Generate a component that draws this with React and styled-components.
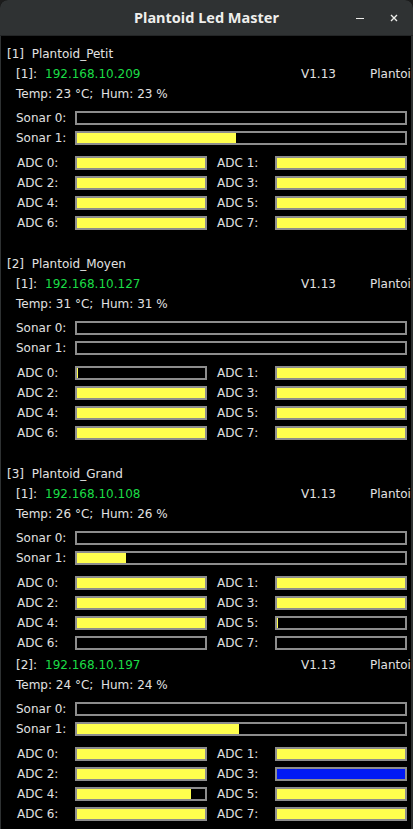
import React from "react";
import styled, { createGlobalStyle } from "styled-components";

const GlobalStyle = createGlobalStyle`
  html, body {
    margin: 0;
    padding: 0;
    background: #1c1c1c;
  }
  * {
    box-sizing: border-box;
  }
`;

const Window = styled.div`
  width: 413px;
  height: 829px;
  display: flex;
  flex-direction: column;
  overflow: hidden;
  border-radius: 8px 8px 0 0;
  background: #000;
`;

const TitleBar = styled.div`
  height: 36px;
  flex: none;
  display: grid;
  grid-template-columns: 1fr auto 1fr;
  align-items: center;
  background: #2f3233;
  border-bottom: 1px solid #232526;
`;

const Title = styled.div`
  grid-column: 2;
  font-family: "Noto Sans", "Open Sans", sans-serif;
  font-weight: bold;
  font-size: 14.5px;
  color: #eeeeec;
  padding-bottom: 1px;
`;

const Controls = styled.div`
  grid-column: 3;
  justify-self: end;
  display: flex;
  padding-right: 2px;
`;

const WinButton = styled.div`
  width: 34px;
  height: 35px;
  display: flex;
  align-items: center;
  justify-content: center;
`;

const Content = styled.div`
  flex: 1;
  overflow: hidden;
  background: #000;
  border-left: 1px solid #2e3132;
  border-right: 2px solid #2e3132;
  padding: 8px 0 0 6px;
  font-family: "DejaVu Sans", "Liberation Sans", sans-serif;
  font-size: 12px;
  color: #e2e2e2;
  white-space: nowrap;
`;

const Section = styled.div`
  margin-bottom: 21px;
`;

const Line = styled.div`
  height: 20px;
  line-height: 20px;
`;

const Device = styled.div`
  padding-left: 9px;
  margin-bottom: 2px;
`;

const IpRow = styled.div`
  height: 20px;
  line-height: 20px;
  display: grid;
  grid-template-columns: 29px 256px 69px auto;
`;

const Ip = styled.span`
  color: #1bdc46;
`;

const Sonars = styled.div`
  margin-top: 4px;
  margin-bottom: 5px;
`;

const SonarRow = styled.div`
  height: 20px;
  display: grid;
  grid-template-columns: 59px 332px;
  align-items: center;
`;

const AdcGrid = styled.div`
  display: grid;
  grid-template-columns: 59px 132px 68px 132px;
  grid-auto-rows: 20px;
  align-items: center;
`;

const AdcLabel = styled.span`
  padding-left: ${(p) => (p.right ? "10px" : "1px")};
  line-height: 20px;
`;

const Label = styled.span`
  line-height: 20px;
`;

const Bar = styled.div`
  height: 14px;
  border: 2px solid #8d8d8d;
  background: #000;
  display: flex;
`;

const Fill = styled.div`
  height: 100%;
  background: ${(p) => p.color || "#ffff4d"};
`;

const ProgressBar = ({ value, color }) => (
  <Bar>
    <Fill color={color} style={{ width: `${value}%` }} />
  </Bar>
);

const plantoids = [
  {
    name: "Plantoid_Petit",
    devices: [
      {
        ip: "192.168.10.209",
        temp: 23,
        hum: 23,
        sonar: [0, 48.5],
        adc: [100, 100, 100, 100, 100, 100, 100, 100],
      },
    ],
  },
  {
    name: "Plantoid_Moyen",
    devices: [
      {
        ip: "192.168.10.127",
        temp: 31,
        hum: 31,
        sonar: [0, 0],
        adc: [1, 100, 100, 100, 100, 100, 100, 100],
      },
    ],
  },
  {
    name: "Plantoid_Grand",
    devices: [
      {
        ip: "192.168.10.108",
        temp: 26,
        hum: 26,
        sonar: [0, 15],
        adc: [100, 100, 100, 100, 100, 1, 0, 0],
      },
      {
        ip: "192.168.10.197",
        temp: 24,
        hum: 24,
        sonar: [0, 49.4],
        adc: [100, 100, 100, 100, 89, 100, 100, 100],
        colors: { 3: "#0019f5" },
      },
    ],
  },
];

const DeviceBlock = ({ index, device, name }) => (
  <Device>
    <IpRow>
      <span>[{index}]:</span>
      <Ip>{device.ip}</Ip>
      <span>V1.13</span>
      <span>{name}</span>
    </IpRow>
    <Line>
      Temp: {device.temp} °C;&nbsp; Hum: {device.hum} %
    </Line>
    <Sonars>
      {device.sonar.map((v, i) => (
        <SonarRow key={i}>
          <Label>Sonar {i}:</Label>
          <ProgressBar value={v} />
        </SonarRow>
      ))}
    </Sonars>
    <AdcGrid>
      {device.adc.map((v, i) => (
        <React.Fragment key={i}>
          <AdcLabel right={i % 2 === 1}>ADC {i}:</AdcLabel>
          <ProgressBar value={v} color={device.colors && device.colors[i]} />
        </React.Fragment>
      ))}
    </AdcGrid>
  </Device>
);

export default function App() {
  return (
    <>
      <GlobalStyle />
      <Window>
        <TitleBar>
          <Title>Plantoid Led Master</Title>
          <Controls>
            <WinButton>
              <svg width="10" height="10" viewBox="0 0 10 10">
                <line x1="1" y1="5.5" x2="9" y2="5.5" stroke="#eeeeec" strokeWidth="1.2" />
              </svg>
            </WinButton>
            <WinButton>
              <svg width="10" height="10" viewBox="0 0 10 10">
                <path d="M2 2 L8 8 M8 2 L2 8" stroke="#eeeeec" strokeWidth="1.4" />
              </svg>
            </WinButton>
          </Controls>
        </TitleBar>
        <Content>
          {plantoids.map((p, si) => (
            <Section key={p.name}>
              <Line>
                [{si + 1}]&nbsp; {p.name}
              </Line>
              {p.devices.map((d, di) => (
                <DeviceBlock key={d.ip} index={di + 1} device={d} name={p.name} />
              ))}
            </Section>
          ))}
        </Content>
      </Window>
    </>
  );
}
